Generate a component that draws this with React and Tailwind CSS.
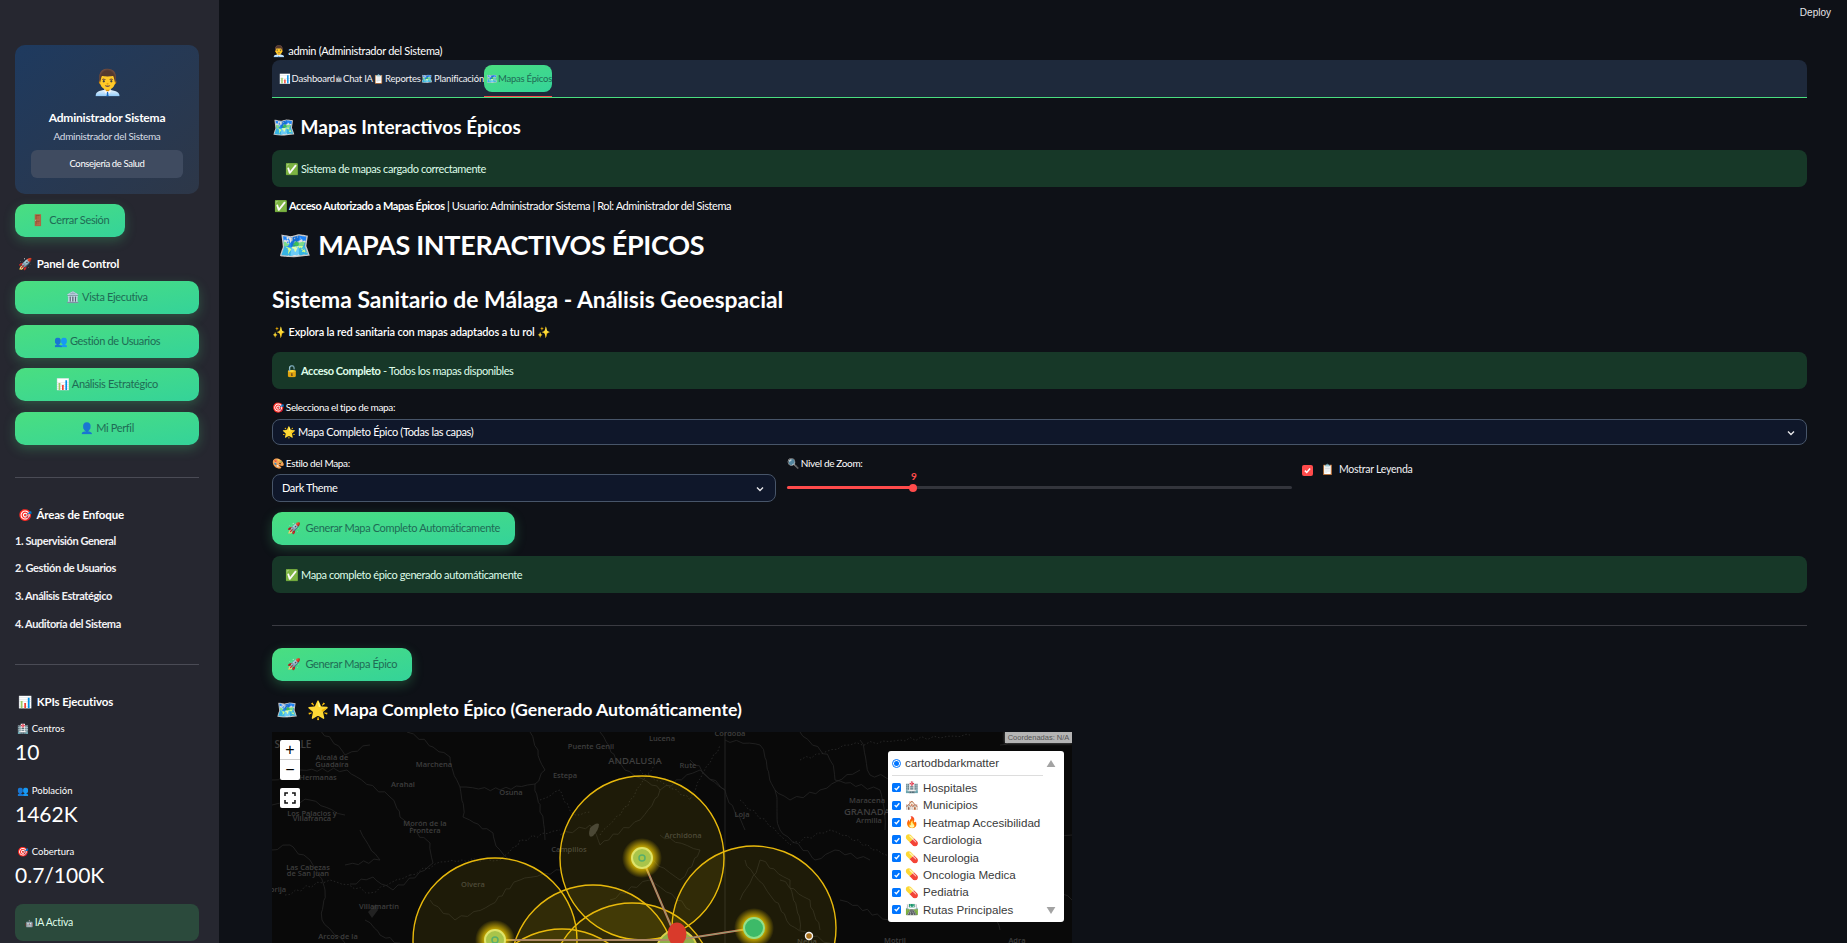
import React from "react";

const Btn = ({ children, className = "" }) => (
  <div className={"flex items-center justify-center h-[33px] whitespace-nowrap rounded-[10px] bg-gradient-to-br from-[#4ade80] to-[#34d399] text-[#1f6b55] text-[11px] tracking-[-0.35px] shadow-[0_4px_12px_rgba(74,222,128,0.25)] " + className}>
    {children}
  </div>
);

const Alert = ({ children, className = "" }) => (
  <div className={"h-[37px] rounded-lg bg-[#173828] text-[#dffde9] text-[11px] tracking-[-0.4px] flex items-center px-[13px] pt-[1px] " + className}>
    {children}
  </div>
);

const labels = [
  ["SEVILLE", 293, 748, 10],
  ["Alcalá de", 332, 760, 7.5],
  ["Guadaíra", 332, 767, 7.5],
  ["Hermanas", 318, 780, 7.5],
  ["Marchena", 434, 767, 7.5],
  ["Arahal", 403, 787, 7.5],
  ["Osuna", 511, 795, 7.5],
  ["Puente Genil", 591, 749, 7.5],
  ["Estepa", 565, 778, 7.5],
  ["ANDALUSIA", 635, 764, 9.5],
  ["Los Palacios y", 312, 816, 7.5],
  ["Villafranca", 312, 821, 7.5],
  ["Morón de la", 425, 826, 7.5],
  ["Frontera", 425, 833, 7.5],
  ["Campillos", 569, 852, 7.5],
  ["Las Cabezas", 308, 870, 7.5],
  ["de San Juan", 308, 876, 7.5],
  ["Olvera", 473, 887, 7.5],
  ["brija", 278, 892, 7.5],
  ["Villamartín", 379, 909, 7.5],
  ["Arcos de la", 338, 939, 7.5],
  ["Cordoba", 730, 736, 7.5],
  ["Lucena", 662, 741, 7.5],
  ["Rute", 688, 768, 7.5],
  ["Loja", 742, 817, 7.5],
  ["Archidona", 683, 838, 7.5],
  ["Maracena", 867, 803, 7.5],
  ["GRANADA", 867, 815, 9.5],
  ["Armilla", 869, 823, 7.5],
  ["Nerja", 807, 944, 7.5],
  ["Motril", 895, 943, 7.5],
  ["Adra", 1017, 943, 7.5],
];

const roads = [
  [[407, 732], [433, 747], [450, 757], [460, 787], [463, 817], [493, 833], [500, 850], [510, 860]],
  [[347, 770], [390, 797], [400, 817], [430, 843], [433, 863], [393, 890], [373, 877], [350, 884]],
  [[272, 780], [300, 770], [347, 770]],
  [[272, 850], [290, 845], [310, 860], [325, 890], [322, 920], [345, 943]],
  [[460, 787], [500, 790], [535, 784], [540, 812], [545, 840]],
  [[530, 732], [538, 750], [545, 770], [535, 784]],
  [[560, 835], [590, 825], [600, 845], [640, 820], [660, 790]],
  [[600, 732], [625, 770], [660, 790], [700, 770], [725, 790]],
  [[725, 740], [760, 745], [775, 790], [790, 800], [820, 790], [860, 770]],
  [[775, 790], [780, 830], [815, 860], [835, 850], [870, 860]],
  [[800, 732], [830, 760], [835, 780], [880, 790], [885, 830]],
  [[860, 740], [870, 775], [920, 780]],
  [[900, 850], [940, 830], [1000, 845], [1072, 835]],
  [[840, 900], [890, 920], [930, 880], [980, 900], [1040, 880], [1072, 900]],
  [[745, 860], [770, 895], [790, 925], [830, 943]],
  [[690, 760], [705, 775], [725, 790], [745, 830]],
  [[430, 900], [455, 920], [490, 905], [520, 880], [560, 870]],
  [[365, 920], [380, 935], [400, 943]],
  [[640, 850], [680, 880], [700, 850], [660, 835]],
  [[272, 805], [310, 800], [345, 815]],
  [[360, 830], [380, 860], [345, 865]],
  [[320, 730], [345, 755], [370, 745]],
  [[610, 900], [650, 880], [690, 910]],
  [[740, 900], [760, 860], [790, 880], [800, 930]],
  [[780, 880], [810, 900], [820, 930]],
  [[920, 900], [970, 870], [1000, 930]],
  [[1065, 740], [1040, 735], [1000, 745]],
];
const borders = [
  [[410, 875], [440, 862], [462, 860], [500, 860], [520, 840], [560, 830]],
  [[285, 895], [330, 880], [370, 893], [410, 875]],
  [[600, 835], [630, 800], [660, 760]],
  [[800, 760], [850, 745], [900, 740], [970, 735]],
  [[740, 800], [790, 845], [830, 830], [900, 860], [950, 850]],
  [[540, 800], [560, 790], [575, 815], [590, 812]],
  [[640, 770], [690, 800], [720, 745]],
];

const wiggle = (pts, k) => {
  let d = "M" + pts[0][0] + " " + pts[0][1];
  let n = k * 7 + 1;
  for (let i = 1; i < pts.length; i++) {
    const [x0, y0] = pts[i - 1];
    const [x1, y1] = pts[i];
    const steps = Math.max(2, Math.round(Math.hypot(x1 - x0, y1 - y0) / 6));
    for (let s = 1; s <= steps; s++) {
      n += 1;
      const t = s / steps;
      const jx = s === steps ? 0 : Math.sin(n * 12.9898) * 1.8;
      const jy = s === steps ? 0 : Math.sin(n * 78.233) * 1.8;
      d += " L" + (x0 + (x1 - x0) * t + jx).toFixed(1) + " " + (y0 + (y1 - y0) * t + jy).toFixed(1);
    }
  }
  return d;
};

const Map = () => (
  <svg viewBox="272 732 800 500" className="block w-[800px] h-[500px]" xmlns="http://www.w3.org/2000/svg">
    <defs>
      <radialGradient id="glow">
        <stop offset="50%" stopColor="#ffd700" stopOpacity="0.8" />
        <stop offset="100%" stopColor="#ffd700" stopOpacity="0" />
      </radialGradient>
    </defs>
    <rect x="272" y="732" width="800" height="500" fill="#090909" />
    <line x1="725" y1="732" x2="725" y2="1232" stroke="#242424" strokeWidth="1" />
    {roads.map((p, i) => (
      <path key={i} d={wiggle(p, i)} fill="none" stroke="#262626" strokeWidth="0.8" strokeLinejoin="round" />
    ))}
    {borders.map((p, i) => (
      <path key={i} d={wiggle(p, i + 40)} fill="none" stroke="#2c2c2c" strokeWidth="0.8" strokeDasharray="1.5 2" />
    ))}
    <path d="M590 828 q6 -6 9 -4 q0 6 -6 12 q-6 3 -3 -8z" fill="#3a3a3a" />
    <path d="M368 912 l8 -8 l2 6 l-6 8z" fill="#222" />
    {labels.map(([t, x, y, s], i) => (
      <text key={i} x={x} y={y} fontSize={s} textAnchor="middle" fill="#3e3e3e" fontWeight="600" fontFamily="'Open Sans',sans-serif">{t}</text>
    ))}
    {[[642, 858], [754, 928], [495, 940], [593, 967], [632, 985], [562, 1011]].map(([cx, cy], i) => (
      <circle key={i} cx={cx} cy={cy} r="82" fill="#ffd700" fillOpacity="0.085" stroke="#e8b90c" strokeWidth="1.4" />
    ))}
    <circle cx="677" cy="950" r="20" fill="#8fb04a" stroke="#d8d04a" strokeWidth="2" />
    {[[642, 858], [754, 928], [495, 940]].map(([x, y], i) => (
      <g key={i}>
        <line x1={x} y1={y} x2="677" y2="940" stroke="#d9705a" strokeWidth="2" />
        <line x1={x} y1={y} x2="677" y2="940" stroke="#6fae7a" strokeWidth="0.8" />
      </g>
    ))}
    <circle cx="642" cy="858" r="20" fill="url(#glow)" />
    <circle cx="642" cy="858" r="10" fill="#a9c44a" stroke="#dfe46a" strokeWidth="2" />
    <circle cx="642" cy="858" r="3" fill="none" stroke="#5aae6a" strokeWidth="1.5" />
    <circle cx="495" cy="940" r="20" fill="url(#glow)" />
    <circle cx="495" cy="940" r="10" fill="#a9c44a" stroke="#dfe46a" strokeWidth="2" />
    <circle cx="495" cy="940" r="3" fill="none" stroke="#5aae6a" strokeWidth="1.5" />
    <circle cx="754" cy="928" r="20" fill="url(#glow)" />
    <circle cx="754" cy="928" r="10" fill="#3dba68" stroke="#93e08a" strokeWidth="2" />
    <ellipse cx="677" cy="934" rx="9.5" ry="11.5" fill="#d93a2b" />
    <circle cx="809" cy="936" r="3.5" fill="#a8701a" stroke="#f2f2f2" strokeWidth="1.4" />
  </svg>
);

const layers = [
  ["🏥", "Hospitales"],
  ["🏘️", "Municipios"],
  ["🔥", "Heatmap Accesibilidad"],
  ["💊", "Cardiologia"],
  ["💊", "Neurologia"],
  ["💊", "Oncologia Medica"],
  ["💊", "Pediatria"],
  ["🛣️", "Rutas Principales"],
];

const Check = () => (
  <span className="w-[9px] h-[9px] rounded-[1.5px] bg-[#0075ff] flex items-center justify-center shrink-0">
    <svg viewBox="0 0 12 12" className="w-[8px] h-[8px]"><path d="M2.5 6.2 L5 8.6 L9.5 3.4" fill="none" stroke="#fff" strokeWidth="2" /></svg>
  </span>
);

const Chev = () => (
  <svg viewBox="0 0 12 12" className="w-[12px] h-[12px]"><path d="M3 4.5 L6 7.5 L9 4.5" fill="none" stroke="#e6e6ea" strokeWidth="1.4" /></svg>
);

export default function App() {
  return (
    <div className="flex h-screen overflow-hidden bg-[#0e1117] text-white font-['Lato','Noto_Sans',sans-serif]">
      <aside className="w-[219px] shrink-0 bg-[#262730] pl-[15px] pr-[20px] pt-[45px] flex flex-col overflow-hidden">
        <div className="h-[149px] shrink-0 rounded-[10px] bg-gradient-to-br from-[#1e3a5f] to-[#2d3748] flex flex-col items-center px-4 pt-[19px]">
          <div className="text-[25px] leading-[34px] h-[34px]">👨‍💼</div>
          <div className="mt-[12px] text-[12px] font-bold leading-4 tracking-[-0.2px]">Administrador Sistema</div>
          <div className="mt-[2px] text-[10px] text-[#d6dce5] leading-4 tracking-[-0.3px]">Administrador del Sistema</div>
          <div className="mt-[6px] w-full h-[28px] rounded-md bg-[#3f4b60] text-[9.5px] tracking-[-0.35px] flex items-center justify-center">Consejería de Salud</div>
        </div>
        <Btn className="mt-[10px] w-[110px] shrink-0">🚪&nbsp; Cerrar Sesión</Btn>
        <div className="mt-[17px] h-[20px] shrink-0 text-[11.5px] tracking-[-0.15px] font-bold flex items-center">&nbsp;🚀&nbsp; Panel de Control</div>
        <Btn className="mt-[7px] shrink-0">🏛️ Vista Ejecutiva</Btn>
        <Btn className="mt-[11px] shrink-0">👥 Gestión de Usuarios</Btn>
        <Btn className="mt-[10px] shrink-0">📊 Análisis Estratégico</Btn>
        <Btn className="mt-[11px] shrink-0">👤 Mi Perfil</Btn>
        <div className="mt-[32px] border-t border-[#4a4b55]" />
        <div className="mt-[27px] h-[20px] shrink-0 text-[11.5px] tracking-[-0.15px] font-bold flex items-center">&nbsp;🎯&nbsp; Áreas de Enfoque</div>
        <ol className="mt-[8px] text-[11px] tracking-[-0.4px] font-bold text-[#f2f2f5] leading-4">
          <li className="h-[27px]">1. Supervisión General</li>
          <li className="h-[28px]">2. Gestión de Usuarios</li>
          <li className="h-[28px]">3. Análisis Estratégico</li>
          <li className="h-[27px]">4. Auditoría del Sistema</li>
        </ol>
        <div className="mt-[21px] border-t border-[#4a4b55]" />
        <div className="mt-[27px] h-[20px] shrink-0 text-[11.5px] tracking-[-0.15px] font-bold flex items-center">&nbsp;📊&nbsp; KPIs Ejecutivos</div>
        <div className="mt-[9px] text-[9.5px] leading-4 h-[16px] shrink-0">&nbsp;🏥 Centros</div>
        <div className="text-[21px] leading-[30px] h-[45.5px] shrink-0">10</div>
        <div className="text-[9.5px] leading-4 h-[16px] shrink-0">&nbsp;👥 Población</div>
        <div className="text-[21px] leading-[30px] h-[45.5px] shrink-0">1462K</div>
        <div className="text-[9.5px] leading-4 h-[16px] shrink-0">&nbsp;🎯 Cobertura</div>
        <div className="text-[21px] leading-[30px] h-[44px] shrink-0">0.7/100K</div>
        <div className="h-[37px] shrink-0 rounded-lg bg-[#2b4a3c] text-[#dffde9] text-[10.5px] tracking-[-0.3px] flex items-center pl-[10px] pt-[1px]"><span className="text-[7px] mr-[1px]">🤖</span>IA Activa</div>
      </aside>

      <main className="flex-1 min-w-0 overflow-hidden">
        <div className="h-[44px] flex justify-end pt-[5px] pr-[16px] text-[10px] font-['Liberation_Sans',sans-serif] text-[#e6e6ea]">Deploy</div>
        <div className="pl-[53px] pr-[40px]">
          <div className="text-[11px] tracking-[-0.3px] leading-[14px]">👨‍💼 admin (Administrador del Sistema)</div>
          <div className="mt-[2px] h-[38px] bg-[#1e293b] rounded-t-lg border-b border-[#4ade80] flex items-start pl-[7px] pt-[5px] text-[9.5px] tracking-[-0.2px] leading-[27px] text-[#f2f2f5] whitespace-nowrap">
            <span className="w-[56px] h-[27px] shrink-0 flex items-center"><span className="w-[14px] text-[9.5px] tracking-normal">📊</span>Dashboard</span>
            <span className="w-[38px] h-[27px] shrink-0 flex items-center"><span className="w-[8px] text-[6px] tracking-normal">🤖</span>Chat IA</span>
            <span className="w-[48px] h-[27px] shrink-0 flex items-center"><span className="w-[12px] text-[9px] tracking-normal">📋</span>Reportes</span>
            <span className="w-[63px] h-[27px] shrink-0 flex items-center"><span className="w-[13px] text-[9.5px] tracking-normal">🗺️</span>Planificación</span>
            <div className="relative h-[27px] w-[68px] shrink-0">
              <span className="flex items-center h-[27px] pl-[2px] rounded-lg bg-gradient-to-br from-[#4ade80] to-[#34d399] text-[#1f6b55] text-[9.5px] tracking-[-0.25px]">
                <span className="w-[14px] text-[9.5px] tracking-normal">🗺️</span>Mapas Épicos
              </span>
              <span className="absolute left-0 right-0 top-[31px] h-[1px] bg-[#ff4b4b]" />
            </div>
          </div>
          <h2 className="mt-[16px] text-[19px] font-bold leading-[26px]">🗺️ Mapas Interactivos Épicos</h2>
          <Alert className="mt-[10px]">✅ Sistema de mapas cargado correctamente</Alert>
          <div className="mt-[11px] text-[11px] tracking-[-0.42px] leading-4"><span className="ml-[2px] mr-[1px] tracking-normal">✅</span><b>Acceso Autorizado a Mapas Épicos</b> | Usuario: Administrador Sistema | Rol: Administrador del Sistema</div>
          <h1 className="mt-[9px] text-[27px] tracking-[-0.3px] font-bold leading-[44px]">&nbsp;🗺️ MAPAS INTERACTIVOS ÉPICOS</h1>
          <h2 className="mt-[16px] text-[22.9px] font-bold leading-[32px]">Sistema Sanitario de Málaga - Análisis Geoespacial</h2>
          <div className="mt-[9px] text-[11px] tracking-[-0.15px] font-semibold leading-4">✨ Explora la red sanitaria con mapas adaptados a tu rol ✨</div>
          <Alert className="mt-[12px]"><span>🔓 <b>Acceso Completo</b> - Todos los mapas disponibles</span></Alert>
          <div className="mt-[11px] text-[10px] tracking-[-0.35px] leading-[14px]">🎯 Selecciona el tipo de mapa:</div>
          <div className="mt-[5px] h-[26px] rounded-lg bg-[#0f172a] border border-[#475569] flex items-center justify-between px-[9px] pt-[1px] text-[11px] tracking-[-0.35px]">
            <span>🌟 Mapa Completo Épico (Todas las capas)</span>
            <Chev />
          </div>
          <div className="mt-[11px] flex h-[45px]">
            <div className="w-[504px] shrink-0">
              <div className="text-[10px] tracking-[-0.35px] leading-[14px]">🎨 Estilo del Mapa:</div>
              <div className="mt-[4px] h-[28px] rounded-lg bg-[#0f172a] border border-[#475569] flex items-center justify-between px-[9px] pt-[1px] text-[11px] tracking-[-0.35px]">
                <span>Dark Theme</span>
                <Chev />
              </div>
            </div>
            <div className="ml-[11px] w-[505px] shrink-0 relative">
              <div className="text-[10px] tracking-[-0.35px] leading-[14px]">🔍 Nivel de Zoom:</div>
              <div className="absolute left-[124px] top-[14px] leading-[12px] text-[10px] font-bold text-[#ff4b4b]">9</div>
              <div className="mt-[16px] h-[3px] w-[505px] bg-[#33353c] rounded relative">
                <div className="h-[3px] w-[126px] bg-[#ff4b4b] rounded" />
                <div className="absolute left-[122px] -top-[2.5px] w-[8px] h-[8px] rounded-full bg-[#ff4b4b]" />
              </div>
            </div>
            <div className="ml-[10px] flex items-center h-[16px] mt-[6px] text-[10.5px] tracking-[-0.25px] text-[#f2f2f5]">
              <span className="w-[11px] h-[11px] rounded-[2px] bg-[#ff4b4b] flex items-center justify-center mr-[8px]">
                <svg viewBox="0 0 12 12" className="w-[9px] h-[9px]"><path d="M2.5 6.2 L5 8.6 L9.5 3.4" fill="none" stroke="#fff" strokeWidth="2" /></svg>
              </span>
              <span className="mr-[5px] tracking-normal">📋</span>Mostrar Leyenda
            </div>
          </div>
          <Btn className="mt-[11px] w-[243px]">🚀&nbsp; Generar Mapa Completo Automáticamente</Btn>
          <Alert className="mt-[11px]">✅ Mapa completo épico generado automáticamente</Alert>
          <div className="mt-[32px] border-t border-[#3a3b42]" />
          <Btn className="mt-[22px] w-[140px]">🚀&nbsp; Generar Mapa Épico</Btn>
          <h3 className="mt-[15px] text-[17.7px] font-bold leading-[28px]">&nbsp;🗺️&nbsp; 🌟 Mapa Completo Épico (Generado Automáticamente)</h3>
          <div className="mt-[8px] w-[800px] h-[500px] relative overflow-hidden">
            <Map />
            <div className="absolute left-[8px] top-[8px] w-[20px] rounded-[2px] bg-white text-black font-['Liberation_Sans',sans-serif]">
              <div className="h-[20px] flex items-center justify-center text-[16px] border-b border-[#ccc]">+</div>
              <div className="h-[20px] flex items-center justify-center text-[16px]">−</div>
            </div>
            <div className="absolute left-[8px] top-[56px] w-[20px] h-[20px] rounded-[2px] bg-white flex items-center justify-center">
              <svg viewBox="0 0 12 12" className="w-[12px] h-[12px]"><path d="M1 4 V1 H4 M8 1 H11 V4 M11 8 V11 H8 M4 11 H1 V8" fill="none" stroke="#111" strokeWidth="1.5" /></svg>
            </div>
            <div className="absolute right-0 top-0 h-[11px] w-[67px] bg-[#b4b4b4] text-[#555] text-[7.5px] leading-[11px] text-center whitespace-nowrap font-['Liberation_Sans',sans-serif] shadow-[0_0_3px_rgba(255,255,255,0.4)]">Coordenadas: N/A</div>
            <div className="absolute left-[616px] top-[19px] w-[176px] h-[171px] rounded-[3px] bg-white text-[#3a3a3a] font-['Liberation_Sans',sans-serif] text-[11.6px] pl-[4px] pt-[3px]">
              <div className="h-[18px] flex items-center gap-[4px] w-[150px]">
                <span className="w-[9px] h-[9px] rounded-full border border-[#0075ff] flex items-center justify-center shrink-0"><span className="w-[5px] h-[5px] rounded-full bg-[#0075ff]" /></span>
                cartodbdarkmatter
              </div>
              <div className="mt-[3px] w-[151px] border-t border-[#ddd]" />
              <div className="mt-[3px]">
                {layers.map(([e, t]) => (
                  <div key={t} className="h-[17.4px] flex items-center gap-[4px] whitespace-nowrap">
                    <Check />
                    <span className="w-[14px] text-[11px]">{e}</span>
                    <span>{t}</span>
                  </div>
                ))}
              </div>
              <svg viewBox="0 0 10 8" className="absolute right-[8px] top-[9px] w-[10px] h-[7px]"><path d="M5 0 L10 8 H0Z" fill="#a3a3a3" /></svg>
              <svg viewBox="0 0 10 8" className="absolute right-[8px] bottom-[8px] w-[10px] h-[7px]"><path d="M5 8 L10 0 H0Z" fill="#a3a3a3" /></svg>
            </div>
          </div>
        </div>
      </main>
    </div>
  );
}
